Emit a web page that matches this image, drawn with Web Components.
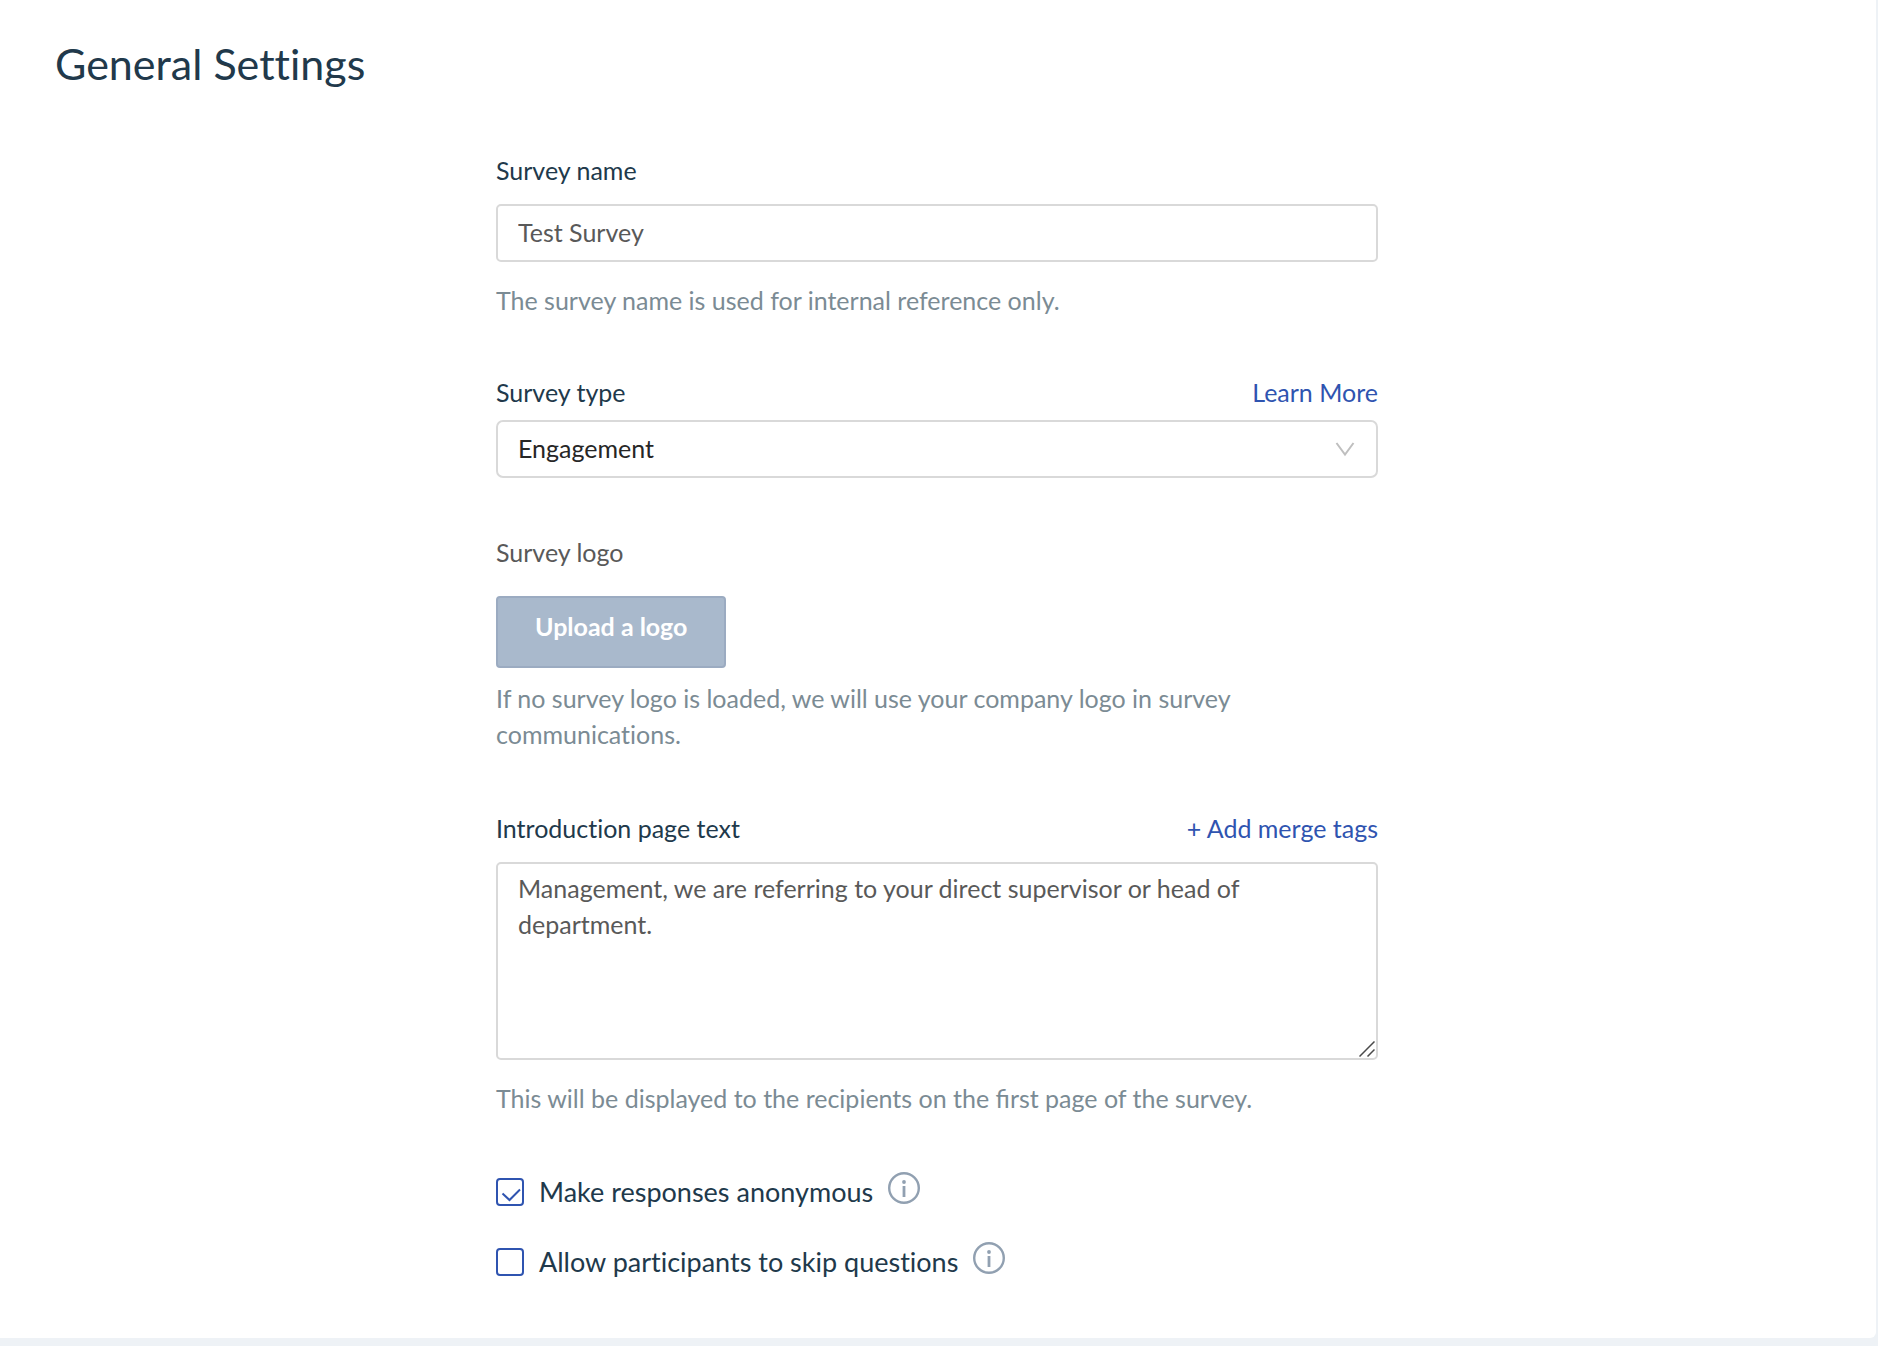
<!DOCTYPE html>
<html lang="en">
<head>
<meta charset="utf-8">
<meta name="viewport" content="width=device-width, initial-scale=1">
<title>General Settings</title>
<style>
  :root {
    --ink: #21394b;
    --muted: #7b8b94;
    --value: #595959;
    --link: #2f54b0;
    --line: #d9d9d9;
    --icon: #91a0b1;
  }

  body {
    margin: 0;
    background: #eef2f6;
    font: 400 25px/36px Lato, "Liberation Sans", sans-serif;
    font-variant-ligatures: none;
    color: var(--ink);
  }
</style>
</head>
<body>
<settings-card heading="General Settings">
  <text-field label="Survey name" value="Test Survey">The survey name is used for internal reference only.</text-field>
  <select-field label="Survey type" link="Learn More" options="Engagement,Onboarding,Exit"></select-field>
  <logo-field label="Survey logo" button="Upload a logo">If no survey logo is loaded, we will use your company logo in survey communications.</logo-field>
  <area-field label="Introduction page text" link="+ Add merge tags" value="Management, we are referring to your direct supervisor or head of department.">This will be displayed to the recipients on the first page of the survey.</area-field>
  <check-list>
    <check-field label="Make responses anonymous" checked></check-field>
    <check-field label="Allow participants to skip questions"></check-field>
  </check-list>
</settings-card>

<script>
const fieldStyles = `
  :host {
    display: block;
  }

  * {
    box-sizing: border-box;
  }

  .head {
    display: flex;
    justify-content: space-between;
    margin-bottom: 16px;
  }

  .link {
    color: var(--link);
    text-decoration: none;
  }

  .control {
    display: block;
    width: 100%;
    margin: 0;
    padding: 0 20px 2px;
    border: 2px solid var(--line);
    border-radius: 5px;
    background: #fff;
    font: inherit;
    color: var(--value);
  }

  .hint {
    margin: 20px 0 0;
    color: var(--muted);
  }
`;

class SettingsCard extends HTMLElement {
  constructor() {
    super();
    this.attachShadow({ mode: "open" });
  }

  connectedCallback() {
    this.shadowRoot.innerHTML = `
      <style>
        :host {
          display: block;
          margin-right: 2px;
          padding: 40px 57px 56px 55px;
          background: #fff;
          border-radius: 0 0 6px 0;
        }

        h1 {
          margin: 0 0 64px;
          font-size: 43px;
          font-weight: 400;
          line-height: 48px;
        }

        .fields {
          display: flex;
          flex-direction: column;
          gap: 56px;
          width: 50%;
          margin: 0 auto;
        }
      </style>

      <main>
        <h1>${this.getAttribute("heading")}</h1>
        <div class="fields"><slot></slot></div>
      </main>
    `;
  }
}

class TextField extends HTMLElement {
  constructor() {
    super();
    this.attachShadow({ mode: "open" });
  }

  connectedCallback() {
    this.shadowRoot.innerHTML = `
      <style>
        ${fieldStyles}

        .control {
          height: 58px;
        }
      </style>

      <div class="head">
        <label for="control">${this.getAttribute("label")}</label>
      </div>
      <input class="control" id="control" type="text" value="${this.getAttribute("value") ?? ""}">
      <p class="hint"><slot></slot></p>
    `;
  }
}

class SelectField extends HTMLElement {
  constructor() {
    super();
    this.attachShadow({ mode: "open" });
  }

  connectedCallback() {
    const options = this.getAttribute("options").split(",");

    this.shadowRoot.innerHTML = `
      <style>
        ${fieldStyles}

        .head {
          margin-bottom: 10px;
        }

        .box {
          display: grid;
          align-items: center;
        }

        .control,
        svg {
          grid-area: 1 / 1;
        }

        .control {
          height: 58px;
          border-radius: 7px;
          appearance: none;
          color: #262626;
        }

        svg {
          justify-self: end;
          margin-right: 23px;
          pointer-events: none;
        }
      </style>

      <div class="head">
        <label for="control">${this.getAttribute("label")}</label>
        <a class="link" href="#">${this.getAttribute("link")}</a>
      </div>
      <div class="box">
        <select class="control" id="control">
          ${options.map((option) => `<option>${option}</option>`).join("")}
        </select>
        <svg width="20" height="16" viewBox="0 0 20 16" fill="none" stroke="#bfbfbf" stroke-width="2" aria-hidden="true">
          <path d="M1.5 2 10 13.500l8.500-11.500"/>
        </svg>
      </div>
    `;
  }
}

class LogoField extends HTMLElement {
  constructor() {
    super();
    this.attachShadow({ mode: "open" });
  }

  connectedCallback() {
    this.shadowRoot.innerHTML = `
      <style>
        ${fieldStyles}

        :host {
          padding-bottom: 2px;
        }

        .head {
          margin-bottom: 26px;
          color: var(--value);
        }

        button {
          display: block;
          padding: 10px 37px 22px;
          border: 2px solid #9babc1;
          border-radius: 4px;
          background: #a9b9cc;
          font: inherit;
          font-weight: 700;
          color: #fff;
        }

        .hint {
          margin-top: 12px;
        }
      </style>

      <div class="head"><span id="label">${this.getAttribute("label")}</span></div>
      <button type="button" aria-describedby="label">${this.getAttribute("button")}</button>
      <p class="hint"><slot></slot></p>
    `;
  }
}

class AreaField extends HTMLElement {
  constructor() {
    super();
    this.attachShadow({ mode: "open" });
  }

  connectedCallback() {
    this.shadowRoot.innerHTML = `
      <style>
        ${fieldStyles}

        .box {
          display: grid;
        }

        .control,
        svg {
          grid-area: 1 / 1;
        }

        .control {
          height: 198px;
          padding: 6px 20px;
          resize: vertical;
        }

        .control::-webkit-resizer {
          display: none;
        }

        svg {
          place-self: end;
          margin: 3px;
          pointer-events: none;
        }

        .hint {
          font-variant-ligatures: normal;
        }
      </style>

      <div class="head">
        <label for="control">${this.getAttribute("label")}</label>
        <a class="link" href="#">${this.getAttribute("link")}</a>
      </div>
      <div class="box">
        <textarea class="control" id="control">${this.getAttribute("value") ?? ""}</textarea>
        <svg width="16" height="16" viewBox="0 0 16 16" fill="none" stroke="#4a4a4a" stroke-width="1.500" aria-hidden="true">
          <path d="M.5 15.500l15-15M8.500 15.500l7-7"/>
        </svg>
      </div>
      <p class="hint"><slot></slot></p>
    `;
  }
}

class CheckList extends HTMLElement {
  constructor() {
    super();
    this.attachShadow({ mode: "open" });
  }

  connectedCallback() {
    this.shadowRoot.innerHTML = `
      <style>
        :host {
          display: flex;
          flex-direction: column;
          gap: 30px;
        }
      </style>

      <slot></slot>
    `;
  }
}

class CheckField extends HTMLElement {
  constructor() {
    super();
    this.attachShadow({ mode: "open" });
  }

  connectedCallback() {
    this.shadowRoot.innerHTML = `
      <style>
        :host {
          display: flex;
          align-items: flex-start;
          gap: 15px;
          font-size: 27px;
          line-height: 40px;
        }

        .box {
          display: grid;
          place-items: center;
          height: 40px;
        }

        input,
        .tick {
          grid-area: 1 / 1;
        }

        input {
          appearance: none;
          box-sizing: border-box;
          width: 28px;
          height: 28px;
          margin: 0;
          border: 2px solid var(--link);
          border-radius: 4px;
          background: #fff;
        }

        .tick {
          visibility: hidden;
          pointer-events: none;
        }

        input:checked + .tick {
          visibility: visible;
        }

        button {
          padding: 0;
          border: 0;
          background: none;
          color: var(--icon);
        }

        button svg {
          display: block;
        }
      </style>

      <span class="box">
        <input id="control" type="checkbox" ${this.hasAttribute("checked") ? "checked" : ""}>
        <svg class="tick" width="28" height="28" viewBox="0 0 28 28" fill="none" stroke="#2f54b0" stroke-width="2" aria-hidden="true">
          <path d="M6.500 15.500l7 6.500L24 11.500"/>
        </svg>
      </span>
      <label for="control">${this.getAttribute("label")}</label>
      <button type="button" aria-label="More information">
        <svg width="32" height="32" viewBox="0 0 32 32" fill="none" stroke="currentColor" aria-hidden="true">
          <circle cx="16" cy="16" r="14.800" stroke-width="2.400"/>
          <path d="M16 14v11" stroke-width="2.800"/>
          <circle cx="16" cy="10" r="1.900" fill="currentColor" stroke="none"/>
        </svg>
      </button>
    `;
  }
}

customElements.define("settings-card", SettingsCard);
customElements.define("text-field", TextField);
customElements.define("select-field", SelectField);
customElements.define("logo-field", LogoField);
customElements.define("area-field", AreaField);
customElements.define("check-list", CheckList);
customElements.define("check-field", CheckField);
</script>
</body>
</html>
